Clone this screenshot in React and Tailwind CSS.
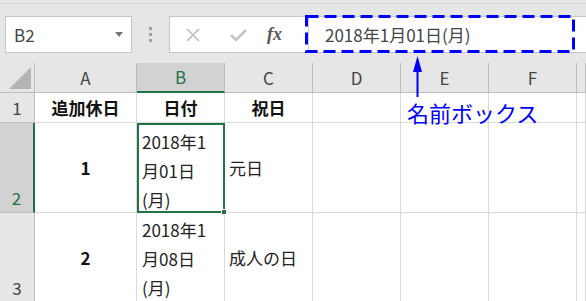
import React from 'react'

const cols = ['A', 'B', 'C', 'D', 'E', 'F', '']
const widths = ['w-[102px]', 'w-[88px]', 'w-[88px]', 'w-[88px]', 'w-[88px]', 'w-[88px]', 'w-[9px]']

function Cell({ w, className = '', children }) {
    return (
        <div className={`${w} shrink-0 border-r border-b border-[#d9d9d9] bg-white ${className}`}>
            {children}
        </div>
    )
}

function DateText({ day, pad = 'pl-[5px]' }) {
    return (
        <div className={`${pad} pt-[2px] leading-[29px] text-[17px] text-[#222]`}>
            2018年1<br />月{day}日<br />(月)
        </div>
    )
}

export default function App() {
    return (
        <div className="relative w-[586px] h-[301px] overflow-hidden bg-[#e6e6e6]" style={{ fontFamily: '"Noto Sans CJK JP", "Noto Sans", sans-serif' }}>
            <div className="h-[4px] border-b border-[#d2d2d2]"></div>

            {/* toolbar: name box + formula bar */}
            <div className="flex items-stretch h-[37px] mt-[12px]">
                <div className="ml-[5px] w-[127px] flex items-center justify-between bg-white border border-[#c6c6c6] pl-[8px] pr-[8px]">
                    <span className="text-[17px] text-[#444]">B2</span>
                    <svg width="8" height="5" viewBox="0 0 8 5"><path d="M0 0 L8 0 L4 5 Z" fill="#777" /></svg>
                </div>
                <div className="w-[37px] flex flex-col items-center justify-center gap-[3px]">
                    <span className="w-[3px] h-[3px] bg-[#a0a0a0]"></span>
                    <span className="w-[3px] h-[3px] bg-[#a0a0a0]"></span>
                    <span className="w-[3px] h-[3px] bg-[#a0a0a0]"></span>
                </div>
                <div className="flex-1 flex items-center bg-white border border-[#c6c6c6] border-r-0">
                    <div className="w-[139px] flex items-center h-full border-r border-[#d4d4d4]">
                        <svg className="ml-[16px]" width="14" height="14" viewBox="0 0 14 14"><path d="M1 1 L13 13 M13 1 L1 13" stroke="#bdbdbd" strokeWidth="1.6" /></svg>
                        <svg className="ml-[30px]" width="17" height="14" viewBox="0 0 17 14"><path d="M1 7 L6 12 L16 2" stroke="#c4c4c4" strokeWidth="2.6" fill="none" /></svg>
                        <span className="ml-[20px] text-[18px] font-bold italic text-[#555]" style={{ fontFamily: '"Liberation Serif", serif' }}>fx</span>
                    </div>
                    <span className="ml-[16px] text-[17px] text-[#444]">2018年1月01日(月)</span>
                </div>
            </div>

            {/* sheet */}
            <div className="mt-[10px] text-[17px]">
                <div className="flex h-[30px]">
                    <div className="w-[35px] shrink-0 border-r border-b border-[#bdbdbd] flex items-end justify-end pr-[3px] pb-[3px]">
                        <svg width="22" height="22" viewBox="0 0 22 22"><path d="M22 0 L22 22 L0 22 Z" fill="#b4b4b4" /></svg>
                    </div>
                    {cols.map((c, i) => (
                        <div key={i} className={`${widths[i]} shrink-0 flex items-center justify-center border-r ${c === 'B' ? 'bg-[#d2d2d2] text-[#217346] border-b-2 border-b-[#217346] border-r-[#bdbdbd]' : 'text-[#444] border-b border-[#bdbdbd]'}`}>
                            {c}
                        </div>
                    ))}
                </div>

                <div className="flex h-[30px]">
                    <div className="w-[35px] shrink-0 border-r border-b border-[#bdbdbd] flex items-center justify-center text-[#444]">1</div>
                    <Cell w={widths[0]} className="flex items-center justify-center font-bold text-[#111]">追加休日</Cell>
                    <Cell w={widths[1]} className="flex items-center justify-center font-bold text-[#111]">日付</Cell>
                    <Cell w={widths[2]} className="flex items-center justify-center font-bold text-[#111]">祝日</Cell>
                    <Cell w={widths[3]} />
                    <Cell w={widths[4]} />
                    <Cell w={widths[5]} />
                    <Cell w={widths[6]} />
                </div>

                <div className="flex h-[90px]">
                    <div className="w-[35px] shrink-0 bg-[#d2d2d2] border-r-2 border-r-[#217346] border-b border-b-[#bdbdbd] flex items-end justify-center pb-[2px] text-[#217346]">2</div>
                    <Cell w={widths[0]} className="flex items-center justify-center font-bold text-[#111]">1</Cell>
                    <div className="relative w-[88px] shrink-0 bg-white border-2 border-[#217346]">
                        <DateText day="01" pad="pl-[3px]" />
                        <span className="absolute -right-[4px] -bottom-[4px] w-[6px] h-[6px] bg-[#217346] border border-white"></span>
                    </div>
                    <Cell w={widths[2]} className="flex items-center pl-[4px] text-[#222]">元日</Cell>
                    <Cell w={widths[3]} />
                    <Cell w={widths[4]} />
                    <Cell w={widths[5]} />
                    <Cell w={widths[6]} />
                </div>

                <div className="flex h-[90px]">
                    <div className="w-[35px] shrink-0 border-r border-b border-[#bdbdbd] flex items-end justify-center pb-[2px] text-[#444]">3</div>
                    <Cell w={widths[0]} className="flex items-center justify-center font-bold text-[#111]">2</Cell>
                    <Cell w={widths[1]}><DateText day="08" /></Cell>
                    <Cell w={widths[2]} className="flex items-center pl-[4px] text-[#222]">成人の日</Cell>
                    <Cell w={widths[3]} />
                    <Cell w={widths[4]} />
                    <Cell w={widths[5]} />
                    <Cell w={widths[6]} />
                </div>
            </div>

            {/* annotation overlay */}
            <svg className="absolute left-0 top-0 pointer-events-none" width="586" height="301">
                <rect x="306.5" y="16.5" width="267" height="35" fill="none" stroke="#0000ff" strokeWidth="3" strokeDasharray="12 6" />
                <path d="M417.5 56 L422 72 L413 72 Z" fill="#0000ff" />
                <path d="M417.5 70 L417.5 97" stroke="#0000ff" strokeWidth="2" />
            </svg>
            <div className="absolute left-[407px] top-[97px] text-[22px] leading-[30px] text-[#0000ff]">名前ボックス</div>
        </div>
    )
}
